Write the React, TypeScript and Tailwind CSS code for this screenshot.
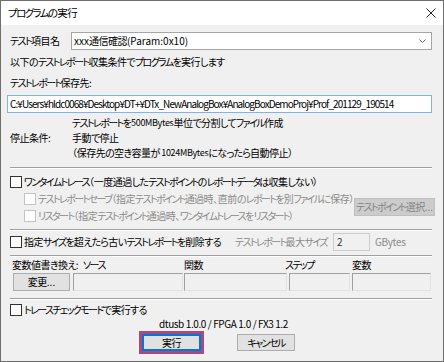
import React from 'react';

// Meiryo UI has narrow kana, so each script run gets its own spacing
const trackFor = (ch: string) => {
  if (/[\u4e00-\u9fff\u3005]/.test(ch)) return 'tracking-[-0.5px]';
  if (/[\u30a0-\u30ff]/.test(ch)) return 'tracking-[-1.6px]';
  if (/[\u3040-\u309f]/.test(ch)) return 'tracking-[-0.8px]';
  if (/[\u3000-\u303f\uff00-\uffef]/.test(ch)) return 'tracking-[-0.3px]';
  return 'tracking-[0px]';
};

const T = ({ s }: { s: string }) => {
  const runs: { cls: string; text: string }[] = [];
  for (const ch of s) {
    const cls = trackFor(ch);
    const last = runs[runs.length - 1];
    if (last && last.cls === cls) last.text += ch;
    else runs.push({ cls, text: ch });
  }
  return (
    <span>
      {runs.map((r, i) => (
        <span key={i} className={r.cls}>
          {r.text}
        </span>
      ))}
    </span>
  );
};

const Checkbox = ({ disabled }: { disabled?: boolean }) => (
  <span
    className={`block w-[12px] h-[12px] border bg-white shrink-0 ${
      disabled ? 'border-[#c4c4c4]' : 'border-[#333333]'
    }`}
  />
);

const Separator = () => (
  <div className="h-[2px] border-t border-t-[#a0a0a0] border-b border-b-white" />
);

const Sunken = ({ className }: { className: string }) => (
  <div className={`h-[18px] border border-[#a0a0a0] border-r-[#e3e3e3] border-b-[#e3e3e3] bg-[#f0f0f0] ${className}`} />
);

export default function App() {
  return (
    <div className="w-[444px] h-[362px] border border-[#6e6e6e] bg-[#f0f0f0] flex flex-col text-[10px] leading-none whitespace-nowrap text-black font-['Noto_Sans_CJK_JP','Noto_Sans',sans-serif] [font-feature-settings:'palt'] overflow-hidden">
      {/* title bar */}
      <div className="h-[24px] bg-white flex items-center justify-between pl-[7px] pr-[7px] shrink-0">
        <span className="text-[10.5px]">
          <T s="プログラムの実行" />
        </span>
        <svg width="10" height="10" viewBox="0 0 10 10" className="mt-[-1px]">
          <path d="M0.5 0.5 L9.5 9.5 M9.5 0.5 L0.5 9.5" stroke="#222" strokeWidth="1" />
        </svg>
      </div>

      <div className="flex flex-col pl-[9px] pr-[11px]">
        {/* test item */}
        <div className="mt-[7px] h-[18px] flex items-center">
          <span className="w-[61px] shrink-0">
            <T s="テスト項目名" />
          </span>
          <div className="flex-1 h-[18px] border border-[#a6a6a6] bg-white flex items-center justify-between pl-[2px] pr-[5px]">
            <T s="xxx通信確認(Param:0x10)" />
            <svg width="7" height="4" viewBox="0 0 7 4">
              <path d="M0.5 0.5 L3.5 3.5 L6.5 0.5" stroke="#606060" fill="none" strokeWidth="1" />
            </svg>
          </div>
        </div>

        <div className="h-[24px] flex items-center">
          <T s="以下のテストレポート収集条件でプログラムを実行します" />
        </div>
        <div className="h-[18px] flex items-center">
          <T s="テストレポート保存先:" />
        </div>

        <div className="mt-[3px] ml-[-3px] h-[18px] border border-[#7eb4ea] bg-white flex items-center pl-[2px] tracking-[-0.92px]">
          C:¥Users¥hldc0068¥Desktop¥DT+¥DTx_NewAnalogBox¥AnalogBoxDemoProj¥Prof_201129_190514
        </div>

        <div className="mt-[2px] h-[15px] flex items-center pl-[62px]">
          <T s="テストレポートを" />
          <span className="text-[9px] tracking-[-0.3px]">500MBytes</span>
          <T s="単位で分割してファイル作成" />
        </div>
        <div className="h-[15px] flex items-center">
          <span className="w-[62px] shrink-0">
            <T s="停止条件:" />
          </span>
          <T s="手動で停止" />
        </div>
        <div className="h-[15px] flex items-center pl-[62px]">
          <T s="（保存先の空き容量が" />
          <span className="text-[9px] tracking-[-0.3px]">&nbsp;1024MBytes</span>
          <T s="になったら自動停止）" />
        </div>

        <div className="mt-[7px]">
          <Separator />
        </div>

        <div className="mt-[5px] h-[16px] flex items-center gap-[2px]">
          <Checkbox />
          <T s="ワンタイムトレース（一度通過したテストポイントのレポートデータは収集しない）" />
        </div>

        <div className="flex">
          <div className="flex flex-col pl-[14px] text-[#8a8a8a]">
            <div className="h-[17px] flex items-center gap-[2px]">
              <Checkbox disabled />
              <T s="テストレポートセーブ（指定テストポイント通過時、直前のレポートを別ファイルに保存）" />
            </div>
            <div className="h-[17px] flex items-center gap-[2px]">
              <Checkbox disabled />
              <T s="リスタート（指定テストポイント通過時、ワンタイムトレースをリスタート）" />
            </div>
          </div>
          <div className="ml-auto mr-[-3px] mt-[8px] w-[87px] h-[18px] border border-[#bfbfbf] bg-[#cccccc] text-[#838383] flex items-center justify-center">
            <T s="テストポイント選択..." />
          </div>
        </div>

        <div className="mt-[5px]">
          <Separator />
        </div>

        <div className="mt-[2px] h-[18px] flex items-center">
          <div className="w-[225px] flex items-center gap-[2px]">
            <Checkbox />
            <T s="指定サイズを超えたら古いテストレポートを削除する" />
          </div>
          <span className="w-[98px] text-[#8a8a8a]">
            <T s="テストレポート最大サイズ" />
          </span>
          <div className="w-[37px] h-[18px] border border-[#cccccc] bg-[#f0f0f0] flex items-center pl-[3px] text-[#333]">
            2
          </div>
          <span className="ml-[5px] tracking-[-0.3px] text-[#8a8a8a]">GBytes</span>
        </div>

        <div className="mt-[4px]">
          <Separator />
        </div>

        <div className="h-[16px] flex items-center pl-[2px]">
          <span className="w-[71px]">
            <T s="変数値書き換え:" />
          </span>
          <span className="w-[101px]">
            <T s="ソース" />
          </span>
          <span className="w-[101px]">
            <T s="関数" />
          </span>
          <span className="w-[67px]">
            <T s="ステップ" />
          </span>
          <T s="変数" />
        </div>

        <div className="h-[18px] flex items-center pl-[3px]">
          <div className="w-[57px] h-[18px] border border-[#adadad] bg-[#e1e1e1] flex items-center justify-center">
            <T s="変更..." />
          </div>
          <Sunken className="ml-[3px] w-[110px]" />
          <Sunken className="ml-[1px] w-[103px]" />
          <Sunken className="ml-[2px] w-[61px]" />
          <Sunken className="ml-[2px] w-[79px]" />
        </div>

        <div className="mt-[7px]">
          <Separator />
        </div>

        <div className="mt-[2px] h-[15px] flex items-center gap-[2px]">
          <Checkbox />
          <T s="トレースチェックモードで実行する" />
        </div>

        <div className="h-[14px] flex items-center pl-[149px] tracking-[-0.4px]">dtusb 1.0.0 / FPGA 1.0 / FX3 1.2</div>

        <div className="flex items-center pl-[129px]">
          <div className="border-[3px] border-[#a94a7d]">
            <div className="w-[59px] h-[17px] border-2 border-[#0078d7] bg-[#e1e1e1] flex items-center justify-center">
              <T s="実行" />
            </div>
          </div>
          <div className="ml-[33px] w-[58px] h-[17px] border border-[#adadad] bg-[#e1e1e1] flex items-center justify-center">
            <T s="キャンセル" />
          </div>
        </div>
      </div>
    </div>
  );
}
